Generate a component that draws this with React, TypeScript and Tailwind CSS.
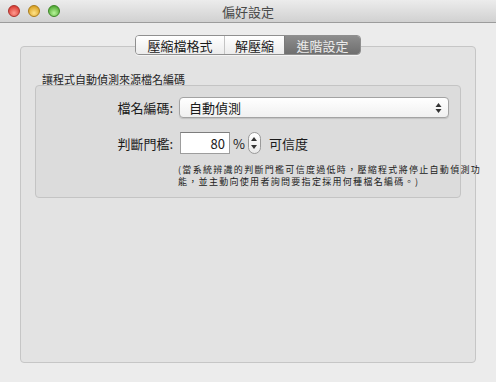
import React from "react";

const font = { fontFamily: '"Noto Sans CJK TC", "Noto Sans", sans-serif' };

function Light({ from, to, border }: { from: string; to: string; border: string }) {
  return (
    <div
      className="w-[12px] h-[12px] rounded-full border"
      style={{ background: `radial-gradient(circle at 50% 70%, ${to} 0%, ${from} 80%)`, borderColor: border }}
    />
  );
}

export default function App() {
  return (
    <div className="w-[496px] h-[382px] bg-[#ececec] flex flex-col overflow-hidden text-[#1a1a1a]" style={font}>
      {/* title bar */}
      <div className="relative h-[23px] shrink-0 flex items-center justify-center border-b border-[#9c9c9c] bg-gradient-to-b from-[#ececec] to-[#d1d1d1]">
        <div className="absolute left-[8px] top-[5px] flex gap-[8px]">
          <Light from="#d93b32" to="#ff9a8f" border="#a9302a" />
          <Light from="#d9a020" to="#ffe38a" border="#a97c1a" />
          <Light from="#4fa832" to="#b8f59a" border="#3c8526" />
        </div>
        <span className="text-[13px] text-[#4a4a4a] leading-none">偏好設定</span>
      </div>

      {/* content */}
      <div className="relative flex-1 px-[20px] pt-[23px] pb-[19px] flex flex-col">
        {/* segmented control */}
        <div className="absolute left-[135px] top-[12px] h-[20px] flex rounded-[4px] border border-[#8f8f8f] overflow-hidden shadow-[0_1px_0_rgba(255,255,255,0.6)] z-10 text-[13px] leading-none">
          <div className="w-[89px] flex items-center justify-center bg-gradient-to-b from-[#ffffff] to-[#ececec] border-r border-[#c4c4c4]">壓縮檔格式</div>
          <div className="w-[60px] flex items-center justify-center bg-gradient-to-b from-[#ffffff] to-[#ececec] border-r border-[#7a7a7a]">解壓縮</div>
          <div className="w-[75px] flex items-center justify-center bg-gradient-to-b from-[#8d8d8d] to-[#6f6f6f] text-[#ececec]">進階設定</div>
        </div>

        <div className="flex-1 rounded-[4px] border border-[#c6c6c6] bg-[#e3e3e3] px-[14px] pt-[27px]">
          <div className="text-[11px] leading-none ml-[7px] text-[#222]">讓程式自動偵測來源檔名編碼</div>
          <div className="rounded-[4px] border border-[#c4c4c4] bg-[#dcdcdc] pt-[11px] pb-[9px]">
            <div className="flex items-center h-[21px]">
              <div className="w-[137px] text-right text-[13px] leading-none">檔名編碼:</div>
              <div className="ml-[6px] w-[270px] h-[21px] rounded-[4px] border border-[#a3a3a3] bg-gradient-to-b from-[#ffffff] to-[#f0f0f0] shadow-[0_1px_1px_rgba(0,0,0,0.12)] flex items-center pl-[9px] pr-[6px]">
                <span className="flex-1 text-[13px] leading-none">自動偵測</span>
                <svg width="7" height="12" viewBox="0 0 7 12">
                  <path d="M3.5 1 L6.5 5 L0.5 5 Z" fill="#333" />
                  <path d="M3.5 11 L6.5 7 L0.5 7 Z" fill="#333" />
                </svg>
              </div>
            </div>
            <div className="flex items-center mt-[14px] h-[22px]">
              <div className="w-[137px] text-right text-[13px] leading-none">判斷門檻:</div>
              <div className="ml-[7px] w-[50px] h-[22px] border border-[#9d9d9d] border-t-[#7d7d7d] bg-white flex items-center justify-end pr-[4px] text-[13px] leading-none">80</div>
              <span className="ml-[3px] text-[13px] leading-none">%</span>
              <div className="ml-[3px] w-[13px] h-[22px] rounded-[7px] border border-[#9a9a9a] bg-gradient-to-b from-[#ffffff] to-[#e9e9e9] flex flex-col items-center justify-center gap-[4px]">
                <svg width="6" height="4" viewBox="0 0 6 4"><path d="M3 0 L6 4 L0 4 Z" fill="#333" /></svg>
                <svg width="6" height="4" viewBox="0 0 6 4"><path d="M3 4 L6 0 L0 0 Z" fill="#333" /></svg>
              </div>
              <span className="ml-[8px] text-[13px] leading-none">可信度</span>
            </div>
            <div className="ml-[142px] mt-[10px] text-[9px] leading-[12px] tracking-[1.3px] whitespace-nowrap text-[#222]">
              (當系統辨識的判斷門檻可信度過低時，壓縮程式將停止自動偵測功
              <br />
              能，並主動向使用者詢問要指定採用何種檔名編碼。)
            </div>
          </div>
        </div>
      </div>
    </div>
  );
}
